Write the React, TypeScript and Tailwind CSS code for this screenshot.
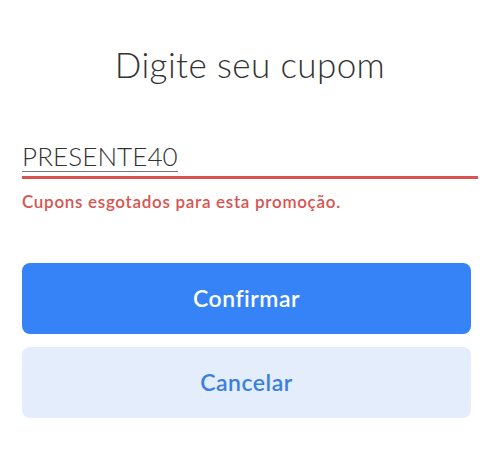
export default function App() {
  return (
    <div
      className="w-[500px] h-[454px] bg-white px-[22px] pt-[44px]"
      style={{ fontFamily: 'Lato, "Noto Sans", sans-serif' }}
    >
      <h1 className="text-center text-[35px] font-light leading-[40px] text-[#333333] tracking-[0.4px]">
        Digite seu cupom
      </h1>

      {/* coupon input */}
      <div className="mt-[58px] border-b-[3px] border-[#d9534f] pb-[4px]">
        <span className="inline-block text-[26px] font-light leading-[29px] text-[#333333] border-b border-[#777777] tracking-[0.1px]">
          PRESENTE40
        </span>
      </div>
      <p className="mt-[12px] text-[17px] font-semibold leading-[22px] text-[#d9534f] tracking-[0.7px]">
        Cupons esgotados para esta promoção.
      </p>

      <div className="mt-[50px] flex flex-col gap-[13px] w-[449px]">
        <button className="h-[71px] rounded-[8px] bg-[#3683f7] text-white text-[23px] font-semibold tracking-[0.5px]">
          Confirmar
        </button>
        <button className="h-[71px] rounded-[8px] bg-[#e3edfb] text-[#3a80e0] text-[23px] font-semibold tracking-[0.5px]">
          Cancelar
        </button>
      </div>
    </div>
  );
}
